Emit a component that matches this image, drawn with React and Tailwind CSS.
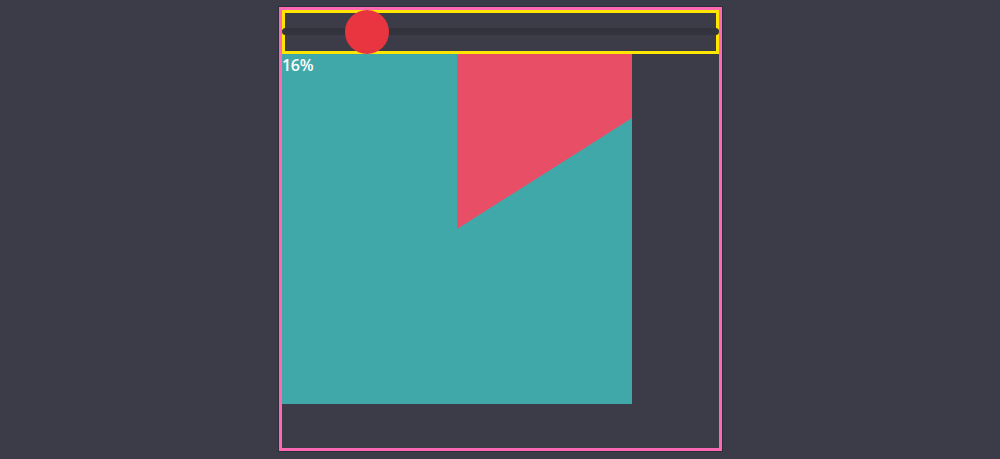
import React from "react";

export default function App() {
  const value = 16;
  const a = (value / 100) * 2 * Math.PI;
  const dx = 175;
  const y = 175 - dx / Math.tan(a);
  const points = `175,175 175,0 350,0 350,${y.toFixed(2)}`;
  const thumbLeft = 21.5 + (value / 100) * (437 - 43);

  return (
    <div className="w-[1000px] h-[459px] bg-[#3c3c49] overflow-hidden" style={{ fontFamily: '"Open Sans", sans-serif' }}>
      <div className="ml-[279px] pt-[7px]">
        <div className="w-[443px] h-[444px] border-[3px] border-[#ff69b4] shadow-[0_0_0_1px_#2e2e3a]">
          <div className="relative h-[44px] border-[3px] border-[#ffe600]">
            <div className="absolute left-[-3px] right-[-3px] top-[15px] h-[7px] rounded-full bg-[#33333e]" />
            <div
              className="absolute top-[-3px] w-[44px] h-[44px] rounded-full bg-[#e8353f]"
              style={{ left: `${thumbLeft - 22 - 3}px` }}
            />
          </div>
          <div className="relative w-[350px] h-[350px]">
            <svg width="350" height="350" viewBox="0 0 350 350" className="block">
              <rect x="0" y="0" width="350" height="350" fill="#41a8aa" />
              <polygon points={points} fill="#e84e66" />
            </svg>
            <div className="absolute left-0 top-0 text-white font-semibold text-[16px] leading-[22px] tracking-[-0.3px]">
              {value}%
            </div>
          </div>
        </div>
      </div>
    </div>
  );
}
